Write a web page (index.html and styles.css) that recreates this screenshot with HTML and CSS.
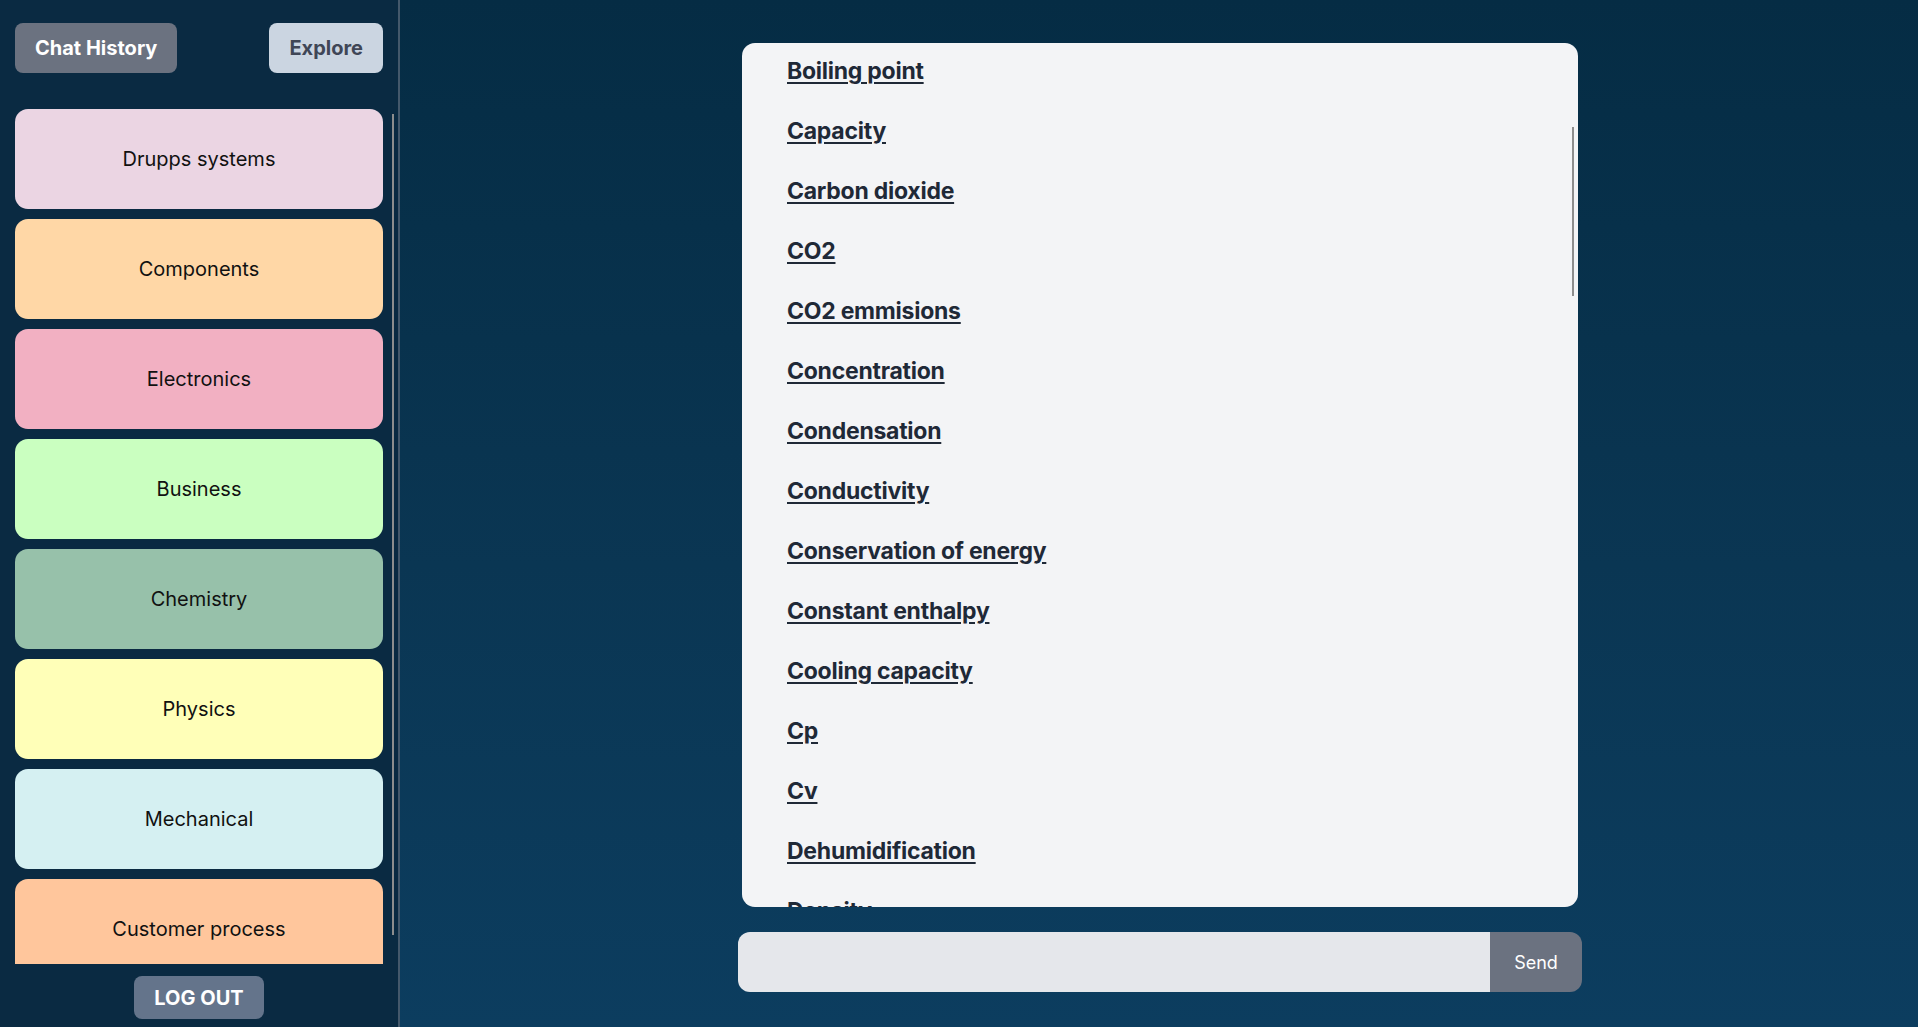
FILE: index.html
```html
<!DOCTYPE html>
<html lang="en">
<head>
<meta charset="utf-8">
<title>Glossary</title>
<link rel="stylesheet" href="styles.css">
</head>
<body>
<div class="app">
  <aside class="sidebar">
    <div class="sidebar-top">
      <button class="btn btn-history">Chat History</button>
      <button class="btn btn-explore">Explore</button>
    </div>
    <div class="topics">
      <div class="topic topic-drupps">Drupps systems</div>
      <div class="topic topic-components">Components</div>
      <div class="topic topic-electronics">Electronics</div>
      <div class="topic topic-business">Business</div>
      <div class="topic topic-chemistry">Chemistry</div>
      <div class="topic topic-physics">Physics</div>
      <div class="topic topic-mechanical">Mechanical</div>
      <div class="topic topic-customer">Customer process</div>
    </div>
    <div class="sidebar-thumb"></div>
    <div class="sidebar-bottom">
      <button class="btn btn-logout">LOG OUT</button>
    </div>
  </aside>
  <main class="main">
    <div class="panel-wrap">
      <section class="panel">
        <ul class="terms">
          <li><a href="#">Boiling point</a></li>
          <li><a href="#">Capacity</a></li>
          <li><a href="#">Carbon dioxide</a></li>
          <li><a href="#">CO2</a></li>
          <li><a href="#">CO2 emmisions</a></li>
          <li><a href="#">Concentration</a></li>
          <li><a href="#">Condensation</a></li>
          <li><a href="#">Conductivity</a></li>
          <li><a href="#">Conservation of energy</a></li>
          <li><a href="#">Constant enthalpy</a></li>
          <li><a href="#">Cooling capacity</a></li>
          <li><a href="#">Cp</a></li>
          <li><a href="#">Cv</a></li>
          <li><a href="#">Dehumidification</a></li>
          <li><a href="#">Density</a></li>
        </ul>
      </section>
      <div class="panel-thumb"></div>
    </div>
    <form class="composer">
      <input class="composer-input" type="text" aria-label="Message">
      <button class="composer-send" type="button">Send</button>
    </form>
  </main>
</div>
</body>
</html>
```

FILE: styles.css
```css
* { box-sizing: border-box; }

html, body {
  margin: 0;
  height: 100%;
}

body {
  font-family: Inter, "Noto Sans", "Liberation Sans", sans-serif;
  background: #0a2a42;
  overflow: hidden;
}

.app {
  display: flex;
  height: 100vh;
}

/* ---------- Sidebar ---------- */
.sidebar {
  position: relative;
  width: 400px;
  flex: none;
  display: flex;
  flex-direction: column;
  background: #0a2a42;
  border-right: 2px solid #44586b;
}

.sidebar-top {
  display: flex;
  justify-content: space-between;
  padding: 23px 15px 0 15px;
}

.btn {
  font-family: inherit;
  font-weight: 700;
  font-size: 20px;
  border: none;
  border-radius: 8px;
  cursor: pointer;
}

.btn-history {
  height: 50px;
  padding: 0 20px;
  background: #6b7280;
  color: #ffffff;
}

.btn-explore {
  height: 50px;
  padding: 0 20px;
  background: #cbd5e1;
  color: #3f4656;
}

.topics {
  flex: 1;
  min-height: 0;
  margin-top: 36px;
  padding: 0 15px 20px 15px;
  overflow-y: auto;
  scrollbar-width: none;
  display: flex;
  flex-direction: column;
  gap: 10px;
}

.topic {
  flex: none;
  height: 100px;
  border-radius: 13px;
  display: flex;
  align-items: center;
  justify-content: center;
  font-size: 20px;
  color: #111111;
}

.topic-drupps { background: #ebd5e3; }
.topic-components { background: #ffd7a6; }
.topic-electronics { background: #f2b0c2; }
.topic-business { background: #caffc0; }
.topic-chemistry { background: #97c1aa; }
.topic-physics { background: #ffffb8; }
.topic-mechanical { background: #d5f0f2; }
.topic-customer { background: #ffc69c; }

.sidebar-thumb {
  position: absolute;
  left: 392px;
  top: 114px;
  width: 2px;
  height: 821px;
  background: #8d8d8d;
}

.sidebar-bottom {
  display: flex;
  justify-content: center;
  padding: 12px 0 8px;
}

.btn-logout {
  height: 43px;
  width: 130px;
  background: #64748b;
  color: #ffffff;
}

/* ---------- Main ---------- */
.main {
  flex: 1;
  display: flex;
  flex-direction: column;
  align-items: center;
  padding-top: 43px;
  padding-left: 2px;
  background: linear-gradient(to bottom, #052c44 0%, #0a3653 55%, #0c3d5f 100%);
}

.panel-wrap {
  position: relative;
  width: 836px;
  height: 864px;
  flex: none;
}

.panel {
  width: 100%;
  height: 100%;
  background: #f3f4f6;
  border-radius: 13px;
  overflow-y: auto;
  scrollbar-width: none;
}

.panel-thumb {
  position: absolute;
  left: 830px;
  top: 84px;
  width: 2px;
  height: 169px;
  background: #8d8d8d;
}

.terms {
  list-style: none;
  margin: 0;
  padding: 12px 0 0 45px;
  display: flex;
  flex-direction: column;
  gap: 28px;
}

.terms li {
  line-height: 32px;
  font-size: 23px;
  letter-spacing: -0.25px;
  font-weight: 700;
}

.terms a {
  color: #1f2937;
  text-decoration: underline;
  text-decoration-thickness: 2px;
  text-underline-offset: 3px;
}

.composer {
  margin: 25px 0 0;
  width: 844px;
  height: 60px;
  display: flex;
}

.composer-input {
  flex: 1;
  border: none;
  outline: none;
  background: #e5e7eb;
  border-radius: 12px 0 0 12px;
  padding: 0 16px;
  font-family: inherit;
  font-size: 18px;
}

.composer-send {
  width: 92px;
  border: none;
  background: #6b7280;
  color: #ffffff;
  border-radius: 0 12px 12px 0;
  font-family: inherit;
  font-size: 18px;
  cursor: pointer;
}
```
